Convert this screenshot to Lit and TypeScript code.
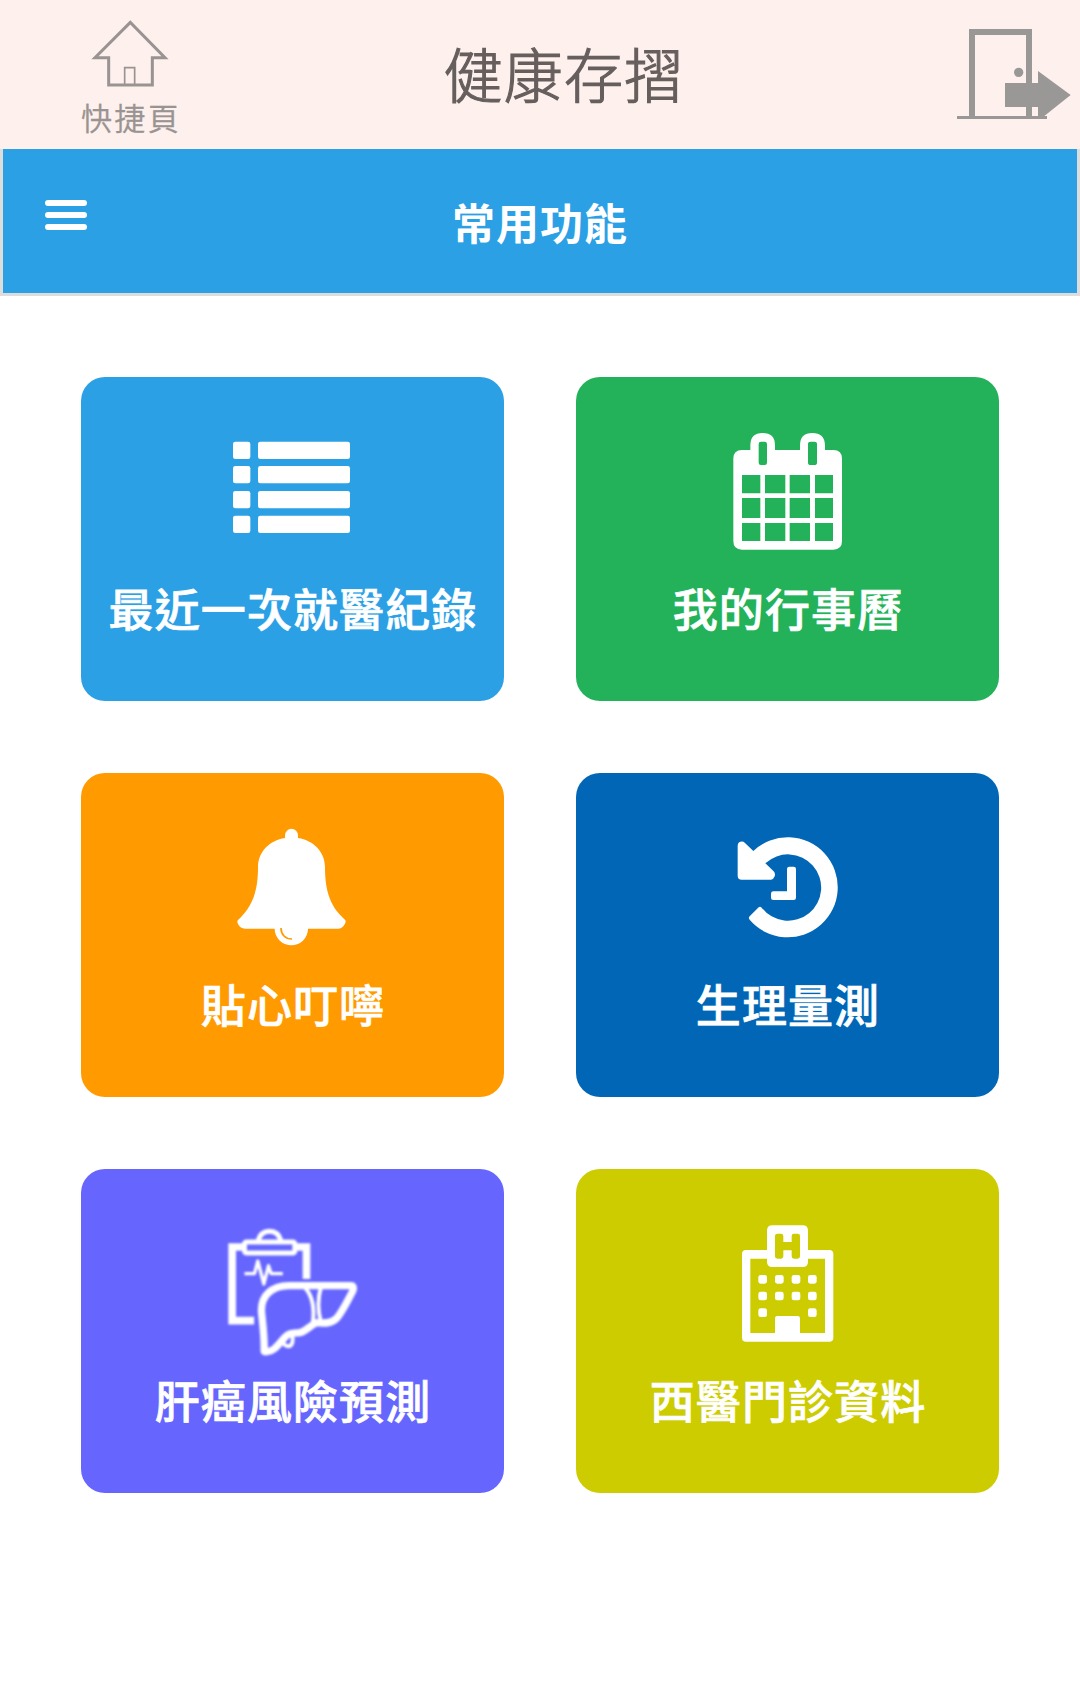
import { LitElement, html, svg, css, nothing } from "lit";
import { customElement, property } from "lit/decorators.js";
import { classMap } from "lit/directives/class-map.js";

type IconName = "list" | "calendar" | "bell" | "history" | "liver" | "hospital";

const rows = [215, 288, 363, 437];
const calX = [[516, 55], [585, 61], [659, 61], [735, 54]];
const calY = [[315, 55], [384, 60], [459, 54]];

const icons: Record<IconName, { box: string; art: unknown }> = {
  list: {
    box: "459 180 420 420",
    art: rows.map(
      (y) => svg`<rect x="489" y=${y} width="52" height="52" rx="7"/><rect x="564" y=${y} width="276" height="52" rx="7"/>`
    ),
  },
  calendar: {
    box: "444 180 420 420",
    art: svg`<path fill-rule="evenodd" d="M516 240H541V226Q541 189 578 189T615 226V240H690V226Q690 189 727 189T765 226V240H790Q816 240 816 266V513Q816 539 790 539H516Q490 539 490 513V266Q490 240 516 240Z
      M573 215Q566 215 566 222V278Q566 285 573 285H584Q591 285 591 278V222Q591 215 584 215Z
      M722 215Q714 215 714 222V278Q714 285 722 285H733Q741 285 741 278V222Q741 215 733 215Z
      ${calX.map(([x, w]) => calY.map(([y, h]) => `M${x} ${y}h${w}v${h}h-${w}z`).join("")).join("")}"/>`,
  },
  bell: {
    box: "459 183 420 420",
    art: svg`<path d="M645 219V211A19.5 19.5 0 0 1 684 211V219C731 226 765 262 765 306C765 382 782 426 825 464Q829 468 825 476Q817 491 804 491H714A50 50 0 0 1 614 491H525Q511 491 504 477Q500 469 504 465C546 426 564 382 564 306C564 262 598 226 645 219Z"/>
      <path class="cut" d="M633 489C633 509 646 522 666 522"/>`,
  },
  history: {
    box: "444 183 420 420",
    art: svg`<path d="M550 258A150 150 0 1 1 539 464Q534 459 539 454L566 427Q570 423 575 428A99.500 99.500 0 1 0 586 295L611 319Q617 325 614 334T603 344H515Q503 344 503 332V243Q503 233 511 230.500T525 234Z"/>
      <path d="M658 305H671Q678 305 678 312V398Q678 405 671 405H610Q603 405 603 398V386Q603 379 610 379H651V312Q651 305 658 305Z"/>`,
  },
  liver: {
    box: "457.5 186 420 420",
    art: svg`<g class="soft">
      <path class="l w22" d="M520 261H485V482H551M676 261H708V357"/>
      <rect class="l w14" x="522" y="246" width="151" height="33" rx="6"/>
      <path class="l w14" d="M562 244C568 222 580 214 597 214S626 222 632 244"/>
      <path class="l w8" d="M522 341H552L562 303L580 372L594 317L602 341H637"/>
      <path class="l w21" d="M581 573C582 530 577 495 573 455C571 405 605 378 655 377H840C851 377 850 388 845 397C832 420 820 447 801 472C787 490 765 491 738 488C720 496 705 514 688 518C670 520 655 518 644 531C620 558 610 574 590 575Q582 576 581 573Z"/>
      <path class="l w12" d="M703 382C724 405 733 440 727 488M751 382C743 410 740 445 751 486"/>
      <path class="l w12" d="M643 530C632 548 643 558 653 559C666 559 670 540 664 522"/>
      </g>`,
  },
  hospital: {
    box: "444 186 420 420",
    art: svg`<path fill-rule="evenodd" d="M607 196H698Q714 196 714 212V270H778Q790 270 790 282V533Q790 545 778 545H528Q516 545 516 533V282Q516 270 528 270H591V212Q591 196 607 196Z
      M541 296V519H615V475Q615 468 622 468H683Q690 468 690 475V519H765V296H714V305Q714 321 698 321H607Q591 321 591 305V296Z
      M622 221Q615 221 615 228V289Q615 296 622 296H633Q640 296 640 289V271H665V289Q665 296 672 296H683Q690 296 690 289V228Q690 221 683 221H672Q665 221 665 228V246H640V228Q640 221 633 221Z"/>
      ${[345, 395, 445].map((y) =>
        [565, 615, 665, 714]
          .filter((x) => y < 445 || x === 565 || x === 714)
          .map((x) => svg`<rect x=${x} y=${y} width="26" height="26" rx="7"/>`)
      )}`,
  },
};

@customElement("feature-tile")
class FeatureTile extends LitElement {
  @property() icon: IconName = "list";
  @property() label = "";
  @property() tone = "";

  static styles = css`
    :host { display: block; }
    .tile {
      box-sizing: border-box;
      height: 324px;
      padding-top: 53px;
      border-radius: 24px;
      display: flex;
      flex-direction: column;
      align-items: center;
      color: #fff;
    }
    .sky { background: #2ca0e5; }
    .green { background: #23b25a; }
    .orange { background: #ff9a00; }
    .blue { background: #0066b5; }
    .violet { background: #6666ff; }
    .olive { background: #cccc00; }
    .icon { width: 140px; height: 140px; fill: #fff; flex: none; }
    .label {
      margin-top: 5px;
      padding-left: 1px;
      font: 500 45px/66px "Noto Sans CJK TC", sans-serif;
      letter-spacing: 1.1px;
      white-space: nowrap;
      -webkit-text-stroke: 0.7px #fff;
    }
    .cut { fill: none; stroke: #ff9a00; stroke-width: 5; }
    .l { fill: none; stroke: #fff; stroke-linejoin: round; }
    .w22 { stroke-width: 23; stroke-linejoin: miter; }
    .w21 { stroke-width: 22; }
    .w14 { stroke-width: 15; }
    .w12 { stroke-width: 12; }
    .w8 { stroke-width: 10; }
    .soft { filter: blur(3px); }
  `;

  render() {
    const i = icons[this.icon];
    return html`<div class=${classMap({ tile: true, [this.tone]: !!this.tone })}>
      ${i ? html`<svg class="icon" viewBox=${i.box}>${i.art}</svg>` : nothing}
      <div class="label">${this.label}</div>
    </div>`;
  }
}

const tiles: { icon: IconName; label: string; tone: string }[] = [
  { icon: "list", label: "最近一次就醫紀錄", tone: "sky" },
  { icon: "calendar", label: "我的行事曆", tone: "green" },
  { icon: "bell", label: "貼心叮嚀", tone: "orange" },
  { icon: "history", label: "生理量測", tone: "blue" },
  { icon: "liver", label: "肝癌風險預測", tone: "violet" },
  { icon: "hospital", label: "西醫門診資料", tone: "olive" },
];

@customElement("app-root")
class AppRoot extends LitElement {
  static styles = css`
    :host {
      display: block;
      min-height: 1700px;
      background: #fff;
      font-family: "Noto Sans CJK TC", sans-serif;
    }
    .top {
      height: 149px;
      box-sizing: border-box;
      background: #fdf0ed;
      display: grid;
      grid-template-columns: 260px 1fr 260px;
    }
    .home {
      display: flex;
      flex-direction: column;
      align-items: center;
      padding-top: 18px;
      color: #999392;
    }
    .house { width: 80px; height: 70px; flex: none; }
    .house path { fill: none; stroke: #999392; }
    .hometext {
      margin-top: 8px;
      padding-left: 2px;
      font-size: 31px;
      line-height: 42px;
      letter-spacing: 2.4px;
      font-weight: 350;
      -webkit-text-stroke: 0.3px #999392;
    }
    .title {
      margin: 0;
      padding: 29px 0 0 48px;
      text-align: center;
      font-weight: 300;
      font-size: 59px;
      line-height: 88px;
      letter-spacing: 1.3px;
      color: #665f5d;
      -webkit-text-stroke: 1.2px #665f5d;
    }
    .exit { display: flex; justify-content: flex-end; padding: 25px 8px 0 0; }
    .door { width: 116px; height: 96px; }
    .nav {
      box-sizing: border-box;
      height: 147px;
      border: solid #ddd;
      border-width: 0 3px 3px;
      background: #2ca0e5;
      display: grid;
      grid-template-columns: 200px 1fr 200px;
      color: #fff;
    }
    .menu {
      display: flex;
      flex-direction: column;
      gap: 6px;
      padding: 51px 0 0 42px;
    }
    .bar { width: 42px; height: 6px; border-radius: 3px; background: #fff; }
    .heading {
      margin: 0;
      padding-top: 40px;
      text-align: center;
      font-size: 43px;
      line-height: 64px;
      font-weight: 700;
      letter-spacing: 1px;
    }
    .grid {
      display: grid;
      grid-template-columns: 423px 423px;
      gap: 72px;
      padding: 81px;
    }
  `;

  render() {
    return html`
      <header class="top">
        <div class="home">
          <svg class="house" viewBox="270 53 240 210">
            <path stroke-width="9" d="M391 66L285 172H326V254H457V172H495Z" />
            <path stroke-width="5" d="M374 254V202H404V254" />
          </svg>
          <div class="hometext">快捷頁</div>
        </div>
        <h1 class="title">健康存摺</h1>
        <div class="exit">
          <svg class="door" viewBox="168 75 348 288" fill="#999897">
            <path d="M207 87H396V249H414V213L512 285L433 348H441V357H171V348H207ZM225 105V348H378V321H315V249H378V105ZM396 321V348H414V321Z" fill-rule="evenodd" />
            <circle cx="356" cy="217" r="14" />
          </svg>
        </div>
      </header>
      <nav class="nav">
        <div class="menu">
          <div class="bar"></div>
          <div class="bar"></div>
          <div class="bar"></div>
        </div>
        <h2 class="heading">常用功能</h2>
      </nav>
      <main class="grid">
        ${tiles.map((t) => html`<feature-tile .icon=${t.icon} .label=${t.label} .tone=${t.tone}></feature-tile>`)}
      </main>
    `;
  }
}
